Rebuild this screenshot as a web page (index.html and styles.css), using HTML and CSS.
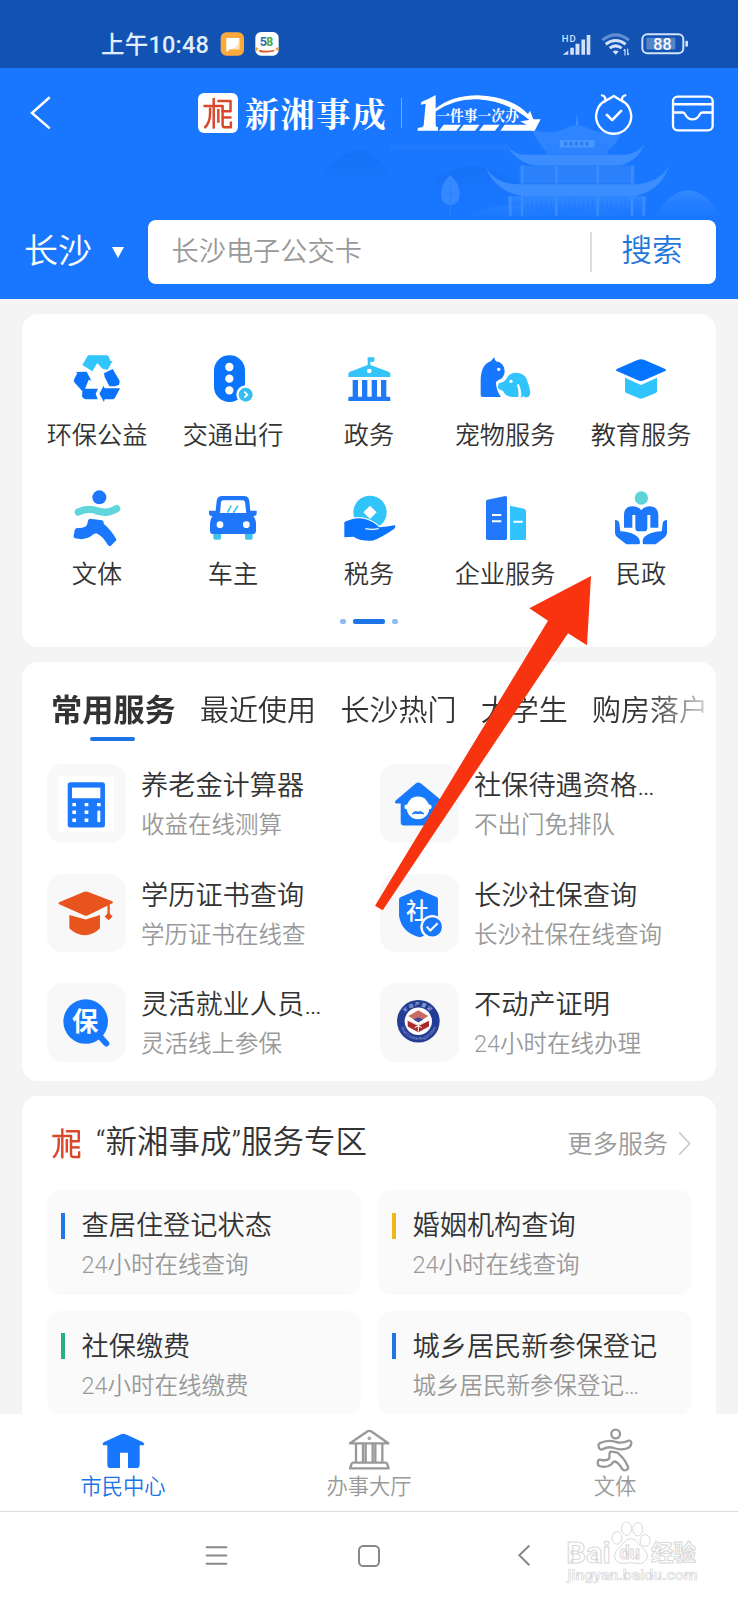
FILE: index.html
```html
<!DOCTYPE html>
<html lang="zh-CN">
<head>
<meta charset="utf-8">
<title>市民中心</title>
<link rel="stylesheet" href="styles.css">
</head>
<body>
<svg class="defs" width="0" height="0" aria-hidden="true">
  <defs>
    <g id="seal" fill="none" stroke="#d8472b" stroke-width="7.500" stroke-linejoin="round">
      <path d="M610 315H668V334"/>
      <path d="M641 291V384"/>
      <path d="M630 320V338Q630 366 613 382"/>
      <path d="M652 300H692V331H664"/>
      <path d="M655 324V366"/>
      <path d="M668 334V372Q668 380 676 380H693V362"/>
      <path d="M668 350H695"/>
    </g>
  </defs>
</svg>
<div class="screen">
  <div class="status">
    <span class="time">上午10:48</span>
    <svg class="app-ico" viewBox="660 96 72 72"><rect x="662" y="97" width="70" height="70" rx="17" fill="#fba93a"/><path d="M679 114h37q2 0 2 2v30q0 2-2 2h-26l-11 9z" fill="#fff"/><path d="M718 116v32h-26q22-5 26-32z" fill="#ffe3b5"/></svg>
    <svg class="app-ico gap" viewBox="764 96 72 72"><rect x="765" y="96" width="70" height="71" rx="17" fill="#fff"/><text x="778" y="138" class="t58"><tspan fill="#2b6fb8">5</tspan><tspan fill="#4aa84a">8</tspan></text><path d="M766 146l6 3M834 146l-6 3" stroke="#f29a1f" stroke-width="9"/><path d="M777 149q22 6 45 0v5q-22 6-45 2z" fill="#e2552c"/></svg>
    <svg class="sig" viewBox="580 94 92 70"><text x="581" y="121" class="hd">HD</text><path d="M584 160l17-13v13zM607 139h11v21h-11zM623 127h12v33h-12zM641 114h11v46h-11zM657 100h11v60h-11z" fill="#d3e2f8"/></svg>
    <svg class="wifi" viewBox="700 96 90 74" fill="none" stroke="#d3e2f8" stroke-width="9"><path d="M704 120q40-32 80 0" stroke="#5f8fd2"/><path d="M714 132q30-22 60 0M726 144q18-14 36 0"/><path d="M735 154q9-6 18 0l-9 10z" fill="#d3e2f8" stroke="none"/><path d="M772 148v18M780 146v18M768 152l4-5M784 160l-4 5" stroke-width="3.500"/></svg>
    <svg class="bat" viewBox="818 96 144 68"><rect x="822" y="102" width="123" height="57" rx="15" fill="none" stroke="#d3e2f8" stroke-width="6"/><rect x="834" y="113" width="87" height="35" rx="3" fill="#5584c9"/><rect x="951" y="122" width="8" height="18" rx="3" fill="#d3e2f8"/><text x="855" y="150" class="pct">88</text></svg>
  </div>

  <header class="header">
    <svg class="scene" viewBox="-300 204 1410 692" aria-hidden="true">
      <defs>
        <linearGradient id="hill" x1="0" y1="0" x2="0" y2="1"><stop offset="0" stop-color="#0f66e6" stop-opacity=".38"/><stop offset="1" stop-color="#1977ff" stop-opacity="0"/></linearGradient>
        <linearGradient id="lite" x1="0" y1="0" x2="0" y2="1"><stop offset="0" stop-color="#4595ff"/><stop offset="1" stop-color="#2a81ff" stop-opacity=".2"/></linearGradient>
      </defs>
      <path d="M-190 640Q-140 455-15 450 60 470 120 640z" fill="url(#hill)"/>
      <path d="M90 640Q200 500 310 500T560 640z" fill="url(#hill)"/>
      <path d="M65 432H420V452H65z" fill="#2780ff" opacity=".4"/>
      <path d="M300 650q120-70 240 0zM590 650q100-50 180 0zM860 645q100-150 200 0z" fill="url(#lite)" opacity=".6"/>
      <path d="M247 525q28 22 28 58-2 32-28 32t-28-32q0-36 28-58z" fill="#4392ff" opacity=".7"/>
      <path d="M247 560V650M247 585l-12-13M247 592l12-13" stroke="#2b81fb" stroke-width="3"/>
      <path d="M627 340l5 40h-10z" fill="#3c8dff"/>
      <path d="M490 388q60 18 105-4 12-8 32-8t32 8q40 20 104 8-18 50-62 68H540q-24-22-50-72z" fill="#2f85ff"/>
      <rect x="535" y="432" width="184" height="30" fill="#2c83fd"/>
      <rect x="575" y="420" width="104" height="22" fill="#4b98ff"/>
      <path d="M588 431h78" stroke="#2a7ef2" stroke-width="12" stroke-dasharray="10 6"/>
      <path d="M416 434q20 32 66 30h290q40-6 56-32-16 48-70 64H500q-56-10-84-62z" fill="#3c8eff"/>
      <path d="M455 496H800V550H455z" fill="#2a81fb"/>
      <path d="M463 496v54M565 496v54M689 496v54M793 496v54" stroke="#3c8eff" stroke-width="7"/>
      <path d="M353 502q30 50 95 50h360q64-5 94-52-22 70-100 88H470q-86-10-117-86z" fill="#3c8eff"/>
      <path d="M420 588H835V648H420z" fill="url(#lite)" opacity=".5"/>
      <path d="M427 588v60M462 588v60M565 588v60M689 588v60M792 588v60M827 588v60" stroke="#3c8eff" stroke-width="7"/>
      <path d="M470 604H786" stroke="#3c8eff" stroke-width="28" stroke-dasharray="3 11" opacity=".6"/>
    </svg>
    <div class="topbar">
      <svg class="back" viewBox="90 286 64 102"><path d="M150 289L96 337 150 384" fill="none" stroke="#fff" stroke-width="7.500"/></svg>
      <span class="badge"><svg viewBox="606 288 96 100"><use href="#seal"/></svg></span>
      <span class="brand">新湘事成</span>
      <i class="vline"></i>
      <svg class="slogan" viewBox="147 280 372 114">
        <path d="M203 283v90q0 6 7 7v10h-62l2-9q16 1 17-8l6-64-15 3 3-9q22-8 42-20z" fill="#fff"/>
        <path d="M200 326Q250 284 330 284 430 288 480 340L486 330 496 356 518 356 500 390H397l13-18h66l-20-10 28-4Q420 302 330 296 255 294 200 334z" fill="#fff"/>
        <path d="M227 372h52l-14 18h-52zM287 372h48l-14 18h-48zM347 372h48l-14 18h-48z" fill="#fff"/>
        <text x="205" y="361" class="slogan-text" textLength="247" lengthAdjust="spacingAndGlyphs">一件事一次办</text>
      </svg>
      <svg class="clock" viewBox="678 276 118 124" fill="none" stroke="#fff" stroke-width="7" stroke-linecap="round" stroke-linejoin="round"><path d="M738 285L718 297A53 53 0 1 0 757 297Z"/><path d="M702 283q6 0 9 6 5 8-2 14M773 283q-6 0-9 6-5 8 2 14"/><path d="M717 342l16 16 27-28" stroke-width="8"/></svg>
      <svg class="inbox" viewBox="909 282 130 112" fill="none" stroke="#fff" stroke-width="7" stroke-linejoin="round"><rect x="915" y="287" width="120" height="102" rx="14"/><path d="M915 310H1035M915 335H944Q950 335 952 341 960 356 974 356T996 341Q998 335 1004 335H1035"/></svg>
    </div>
    <div class="search-row">
      <span class="city">长沙</span>
      <i class="caret"></i>
      <div class="search"><span class="ph">长沙电子公交卡</span><span class="go">搜索</span></div>
    </div>
  </header>

  <main class="content">
    <section class="card grid">
      <div class="cell"><svg viewBox="147 123 168 168"><path d="M204 136h56q4 0 7 5l5 13 6-2-15 27-30-5 8-4-9-10-15 24-30-19z" fill="#31c5fc"/><path d="M232 160l22 24h-36z" fill="#fff"/><path d="M166 186l34-1 14 27-8-3-10 25q-5 8-7 12l-26-29q-3-6 0-10l9-18zM252 190l26-13 20 34q3 7-1 13l-12 5h-17l-14-28zM188 236h46l-7 15 6 17h-36q-9-1-11-9zM238 251l13-24 3 8h46l-15 28q-3 5-9 5h-22l-2 8z" fill="#0a73fb"/></svg><span>环保公益</span></div>
      <div class="cell"><svg viewBox="555 123 168 168"><rect x="582" y="136" width="93" height="140" rx="46" fill="#0b74fd"/><g fill="#fff"><circle cx="628" cy="171" r="12.500"/><circle cx="628" cy="206" r="12.500"/><circle cx="628" cy="241" r="12.500"/><circle cx="677" cy="254" r="28"/></g><circle cx="677" cy="254" r="21" fill="#36bdf0"/><path d="M673 245l9 9-9 9" fill="none" stroke="#fff" stroke-width="5"/></svg><span>交通出行</span></div>
      <div class="cell"><svg viewBox="963 123 168 168"><path d="M1043 142h20v13h-12v10l55 20q5 2 5 8v8H985v-8q0-6 5-8l53-20z" fill="#35c4f8"/><circle cx="1048" cy="183" r="7" fill="#fff"/><path d="M998 210h16v50h12v-50h16v50h13v-50h16v50h12v-50h16v50h8q4 0 4 4v9H985v-9q0-4 4-4h9z" fill="#2079f5"/></svg><span>政务</span></div>
      <div class="cell"><svg viewBox="327 123 168 168"><path d="M379 142q1 8 5 12 24 4 26 28 0 14-10 24-16 6-16 12 0 22 15 43H344q-6 0-6-6V212q0-48 30-58z" fill="#1677ff"/><circle cx="392" cy="178" r="5" fill="#fff"/><path d="M392 220q18-2 26-18 8-14 26-14 24 0 32 20 8 20 11 38 0 10-6 15-10 3-16-4-2-20-10-34-4-2-8 2 6 18 4 36h-20q-18-2-26-18-12-4-16-10z" fill="#31c3fb"/><path d="M451 222q8 18 6 42 18-4 6-40z" fill="#31c3fb"/><circle cx="429" cy="214" r="5" fill="#fff"/><path d="M450 224q9 17 7 38" fill="none" stroke="#fff" stroke-width="5"/></svg><span>宠物服务</span></div>
      <div class="cell"><svg viewBox="735 123 168 168"><path d="M771 203l48 22 48-22v40q0 4-4 6l-38 16q-6 2-12 0l-38-16q-4-2-4-6z" fill="#2fc4fc"/><path d="M810 149q9-3 18 0l62 27q8 4 0 8l-62 27q-9 4-18 0l-62-27q-8-4 0-8z" fill="#0474ff" stroke="#fff" stroke-width="12" paint-order="stroke"/></svg><span>教育服务</span></div>
      <div class="cell"><svg viewBox="147 540 168 168"><circle cx="238" cy="562" r="21" fill="#1b78fc"/><path d="M175 606q28-14 58-3 30 10 57-7" fill="none" stroke="#5ed6dc" stroke-width="22" stroke-linecap="round"/><path d="M210 626l36 5q4 1 5 6v4q22 18 39 48l-17 18q-5 3-9-1-16-28-35-36-10 2-16 9-18 13-48 6-5-2-4-7l3-17q2-6 8-8 14 3 26-4 5-8 6-17 2-6 6-6z" fill="#1b78fc"/></svg><span>文体</span></div>
      <div class="cell"><svg viewBox="555 540 168 168"><path d="M580 670h23v14q0 5-5 5h-13q-5 0-5-5zM675 670h23v14q0 5-5 5h-13q-5 0-5-5z" fill="#3fc3ea"/><path d="M606 558h66q14 0 16 15l3 29h19v8q0 8-8 8h-2q8 10 8 22v22q0 10-10 10H580q-10 0-10-10v-22q0-12 7-22h-2q-8 0-8-8v-8h20l3-29q2-15 16-15z" fill="#2076f8"/><path d="M610 571h58q6 0 7 6l4 32h-79l3-32q1-6 7-6z" fill="#fff"/><path d="M634 587l-12 21M654 587l-14 21" stroke="#3fc3ea" stroke-width="5"/><circle cx="600" cy="644" r="10" fill="#fff"/><circle cx="679" cy="644" r="10" fill="#fff"/></svg><span>车主</span></div>
      <div class="cell"><svg viewBox="963 540 168 168"><circle cx="1050" cy="607" r="50" fill="#31c4fb"/><path d="M1050 587l20 20-20 20-20-20z" fill="#fff"/><path d="M973 636q36-18 64-8 26 8 40 24 26-2 46-6 6 1 0 10-40 28-66 36-38 2-56-12l-28 2z" fill="#0a74fe" stroke="#fff" stroke-width="7" paint-order="stroke"/><path d="M1036 656q18 4 40 0" fill="none" stroke="#fff" stroke-width="4"/></svg><span>税务</span></div>
      <div class="cell"><svg viewBox="327 540 168 168"><path d="M354 575q0-5 4-6l54-11q5 0 5 5v122q0 5-5 5h-53q-5 0-5-5z" fill="#2178fa"/><path d="M426 587l42 9q6 2 6 8v82q0 4-4 4h-44z" fill="#31c3fd"/><path d="M372 615h28M372 634h28M436 635h28" stroke="#fff" stroke-width="6"/></svg><span>企业服务</span></div>
      <div class="cell"><svg viewBox="735 540 168 168"><circle cx="820" cy="564" r="20" fill="#5dd4da"/><path d="M768 653v-38q0-25 25-26 18 0 27 12 9-12 27-12 23 2 24 26v38h-24v-38h-9v38q0 11-9 11h-18q-9 0-9-11v-38h-9v38z" fill="#1b78fa"/><path d="M741 630q11 0 13 10l3 24q24 0 44 11 15 8 15 23 0 5-5 5h-36l-28-22q-6-5-6-13zM897 630q-11 0-13 10l-3 24q-24 0-44 11-15 8-13 23 0 5 5 5h34l28-22q6-5 6-13z" fill="#1b78fa"/></svg><span>民政</span></div>
      <div class="pager"><i></i><i class="on"></i><i></i></div>
    </section>

    <section class="card services">
      <nav class="tabs"><b>常用服务</b><span>最近使用</span><span>长沙热门</span><span>大学生</span><span>购房落户</span></nav>
      <div class="list">
        <div class="item"><div class="tile"><svg viewBox="80 311 237 236"><path d="M114 348H280V514H114z" fill="#fff"/><rect x="142" y="366" width="112" height="136" rx="8" fill="#1c79fb"/><path d="M155 382h85v32h-85z" fill="#fff"/><path d="M156 433h11M156 456h11M156 480h11M193 433h11M193 456h11M193 480h11M230 433h11" stroke="#fff" stroke-width="10"/><rect x="231" y="451" width="9" height="35" rx="4" fill="#fff"/></svg></div><div class="txt"><p>养老金计算器</p><small>收益在线测算</small></div></div>
        <div class="item"><div class="tile"><svg viewBox="59 311 237 236"><path d="M167 369q7-5 14 0l63 52q5 9-6 9h-9v57q0 9-9 9H131q-10 0-10-10v-56h-11q-10 0-4-9z" fill="#1779fb"/><ellipse cx="173" cy="443" rx="34" ry="34" fill="#fff"/><circle cx="139" cy="440" r="7" fill="#fff"/><circle cx="207" cy="440" r="7" fill="#fff"/><path d="M155 461q10-11 18-5 8-6 18 5-10-4-18-1-8-3-18 1z" fill="#1779fb" stroke="#1779fb" stroke-width="3"/></svg></div><div class="txt"><p>社保待遇资格…</p><small>不出门免排队</small></div></div>
        <div class="item"><div class="tile"><svg viewBox="80 641 237 236"><path d="M190 695q7-3 14 0l70 27q8 4 1 8l-72 35q-6 3-12 0l-73-32q-8-4 0-8zM147 764l49 14 43-14v40q-20 21-46 21t-46-21z" fill="#e8541e"/><path d="M265 733v32" stroke="#e8541e" stroke-width="7"/><path d="M265 757l12 12-12 11-12-11z" fill="#e8541e"/></svg></div><div class="txt"><p>学历证书查询</p><small>学历证书在线查</small></div></div>
        <div class="item"><div class="tile"><svg viewBox="59 641 237 236"><path d="M169 690q6-3 12 0l49 21q3 1 3 6v52q-4 46-54 62-55-13-63-64v-49q0-5 4-7z" fill="#1878fb"/><text x="137" y="777" class="glyph sm">社</text><circle cx="216" cy="800" r="36" fill="#fafafa"/><circle cx="216" cy="800" r="29" fill="#1878fb"/><path d="M199 799l11 12 22-22" fill="none" stroke="#fff" stroke-width="6"/></svg></div><div class="txt"><p>长沙社保查询</p><small>长沙社保在线查询</small></div></div>
        <div class="item"><div class="tile"><svg viewBox="80 970 237 236"><path d="M236 1128l22 24" stroke="#1878fb" stroke-width="18" stroke-linecap="round"/><circle cx="196" cy="1086" r="67" fill="#1878fb"/><text x="155" y="1115" class="glyph">保</text></svg></div><div class="txt"><p>灵活就业人员…</p><small>灵活线上参保</small></div></div>
        <div class="item"><div class="tile"><svg viewBox="59 970 237 236"><circle cx="174" cy="1085" r="64" fill="#233d94"/><path id="arc" d="M128 1085a46 46 0 0 1 92 0" fill="none"/><path id="arc2" d="M118 1085a56 56 0 0 0 112 0" fill="none"/><circle cx="174" cy="1085" r="41" fill="#fff"/><text class="ring"><textPath href="#arc" startOffset="26">不动产登记</textPath></text><text class="ring en"><textPath href="#arc2" startOffset="20">Real Estate Registration</textPath></text><path d="M174 1052l30 17-30 20-30-20z" fill="#c96a63"/><path d="M159 1080l15-7 15 7-15 8z" fill="#394a99"/><path d="M142 1081l32 15 32-15v20l-32 17-32-17z" fill="#a92a2a"/><path d="M142 1082l32 16 32-16M174 1098v18M163 1104l11-5 10 5" fill="none" stroke="#fff" stroke-width="3"/></svg></div><div class="txt"><p>不动产证明</p><small>24小时在线办理</small></div></div>
      </div>
    </section>

    <section class="card zone">
      <div class="zone-head">
        <svg class="zone-logo" viewBox="606 288 96 100"><use href="#seal"/></svg>
        <h2>“新湘事成”服务专区</h2>
        <span class="more">更多服务</span>
        <svg class="chev" viewBox="955 122 40 76"><path d="M959 126l32 34-32 34" fill="none" stroke="#c8c8c8" stroke-width="5"/></svg>
      </div>
      <div class="boxes">
        <div class="box"><i class="bar"></i><div><p>查居住登记状态</p><small>24小时在线查询</small></div></div>
        <div class="box"><i class="bar yellow"></i><div><p>婚姻机构查询</p><small>24小时在线查询</small></div></div>
        <div class="box"><i class="bar green"></i><div><p>社保缴费</p><small>24小时在线缴费</small></div></div>
        <div class="box"><i class="bar"></i><div><p>城乡居民新参保登记</p><small>城乡居民新参保登记…</small></div></div>
      </div>
    </section>
  </main>

  <nav class="tabbar">
    <div class="tab active"><svg viewBox="299 86 138 132"><path d="M362 105q7-4 14 0l52 24q6 4 3 9h-13v58q0 10-10 10h-25v-46h-24v46h-28q-10 0-10-10v-58h-13q-4-5 2-9z" fill="#1777ff"/></svg><span>市民中心</span></div>
    <div class="tab"><svg viewBox="1038 86 138 132" fill="none" stroke="#999" stroke-width="7" stroke-linejoin="round"><path d="M1050 132l53-36q5-3 10 0l52 36zM1068 133v56M1089 133v56M1097 133v56M1118 133v56M1126 133v56M1147 133v56M1056 190H1160M1056 190l-6 17H1166l-6-17"/><circle cx="1108" cy="117" r="2"/></svg><span>办事大厅</span></div>
    <div class="tab"><svg viewBox="674 86 138 132" fill="none" stroke="#999" stroke-width="7" stroke-linejoin="round"><circle cx="745" cy="104" r="13"/><path d="M696 132q26-12 50-4 20 5 37-4 9-2 9 8-1 11-15 16-18 5-38-2-14-6-34 4-8 3-11-8-2-7 2-10zM727 160q1-4 6-3l17 3q4 1 6 6 14 10 26 36 2 7-5 10-8 3-12-2-10-20-23-24-6 2-10 9-15 12-36 5-7-4-4-14 3-8 10-4 20 3 24-6z"/></svg><span>文体</span></div>
  </nav>

  <div class="sysnav">
    <svg class="menu" viewBox="618 434 64 64"><path d="M620 441h60M620 466h60M620 491h60" stroke="#888" stroke-width="6" stroke-linecap="round"/></svg>
    <svg class="home" viewBox="0 0 66 66"><rect x="3" y="3" width="60" height="60" rx="13" fill="none" stroke="#888" stroke-width="6"/></svg>
    <svg class="prev" viewBox="450 432 40 70"><path d="M485 436L454 466l31 31" fill="none" stroke="#888" stroke-width="6"/></svg>
    <svg class="mark" viewBox="590 356 404 196" aria-hidden="true">
      <g class="mk"><text x="592" y="485" class="mk-a" textLength="134" lengthAdjust="spacingAndGlyphs">Bai</text>
      <ellipse cx="745" cy="410" rx="15" ry="19"/><ellipse cx="774" cy="382" rx="15" ry="20"/><ellipse cx="808" cy="384" rx="15" ry="20"/><ellipse cx="830" cy="418" rx="15" ry="18"/><path d="M787 412q14 0 23 14 8 12 18 19 14 16 5 32-8 12-24 10-22-4-44 0-18 0-25-13-6-18 8-30 10-8 16-18 9-14 23-14z"/><text x="753" y="474" class="mk-d">du</text>
      <text x="848" y="480" class="mk-b">经验</text><text x="596" y="537" class="mk-c" textLength="392" lengthAdjust="spacingAndGlyphs">jingyan.baidu.com</text></g>
    </svg>
  </div>

  <svg class="pointer" viewBox="375 576 217 335" aria-hidden="true"><path d="M591 576L529.300 608.300 548 620.700 375 905.700 382.700 910.300 568 633.300 587 645.300z" fill="#f7340f"/></svg>
</div>
</body>
</html>
```

FILE: styles.css
```css
* { box-sizing: border-box; margin: 0; padding: 0; }
body { background: #f4f4f4; font-family: Roboto, "Noto Sans CJK SC", sans-serif; color: #333; }
i { display: block; }
svg { display: block; flex: none; overflow: visible; }
.defs { position: absolute; }
.screen { position: relative; width: 738px; height: 1600px; overflow: hidden; display: flex; flex-direction: column; white-space: nowrap; }

/* status bar */
.status { height: 68px; flex: none; background: #1152b3; display: flex; align-items: center; padding: 20px 17px 0 101px; color: #e3edfb; }
.time { font-size: 23.500px; line-height: 28px; font-weight: 500; width: 119px; letter-spacing: .2px; padding-top: 1px; }
.app-ico { width: 24px; height: 24px; }
.app-ico.gap { margin-left: 10.500px; }
.t58 { font: bold 38px Roboto, sans-serif; letter-spacing: -3px; }
.sig { width: 31px; height: 23px; margin-left: auto; }
.hd { font: 500 29px Roboto, sans-serif; fill: #d3e2f8; letter-spacing: 3px; }
.wifi { width: 30px; height: 25px; margin-left: 9px; }
.bat { width: 48px; height: 23px; margin: -1px 32px 0 10px; }
.pct { font: 500 48px Roboto, sans-serif; fill: #fff; }

/* header */
.header { position: relative; height: 231px; flex: none; background: #1977ff; }
.scene { position: absolute; right: 0; top: 0; width: 470px; height: 231px; }
.topbar { position: relative; height: 90px; display: flex; align-items: center; padding-left: 30px; }
.back { width: 21px; height: 34px; margin-top: -1px; }
.badge { width: 40px; height: 40px; margin-left: 147px; background: #fff; border-radius: 6px; display: flex; align-items: center; justify-content: center; }
.badge svg { width: 32px; height: 33px; }
.brand { margin-left: 7px; width: 145px; font: bold 34px/40px "Noto Serif CJK SC", "Noto Sans CJK SC", serif; letter-spacing: 1.600px; color: #fff; }
.vline { width: 1px; height: 30px; margin-left: 11px; background: #6fa9ff; }
.slogan { width: 124px; height: 38px; margin-left: 15px; }
.slogan-text { font: bold 43px "Noto Serif CJK SC", "Noto Sans CJK SC", serif; fill: #fff; }
.clock { width: 39px; height: 41px; margin-left: 53px; }
.inbox { width: 43px; height: 37px; margin-left: 38px; }
.search-row { position: relative; display: flex; align-items: center; margin-top: 62px; padding-left: 24px; height: 64px; }
.city { font-size: 34px; line-height: 44px; width: 88px; color: #fff; font-weight: 350; }
.caret { border: solid transparent; border-width: 11px 6.500px 0; border-top-color: #fff; }
.search { margin-left: 23.500px; width: 568px; height: 64px; background: #fff; border-radius: 8px; display: flex; align-items: center; }
.ph { font-size: 27.200px; color: #999; padding-left: 24px; width: 444px; line-height: 40px; border-right: 2px solid #ddd; font-weight: 350; }
.go { font-size: 30.500px; line-height: 40px; color: #1f76dc; margin-left: 30px; font-weight: 350; }
.city, .go { margin-top: -2px; }

/* cards */
.content { height: 1115px; flex: none; padding: 15px 22px 0; overflow: hidden; display: flex; flex-direction: column; gap: 15px; font-weight: 350; }
.card { flex: none; background: #fff; border-radius: 16px; }
.grid { height: 333px; padding: 37px 7px 0; display: grid; grid-template-columns: repeat(5, 136px); grid-template-rows: 139px 129px 20px; }
.cell { display: flex; flex-direction: column; align-items: center; }
.cell svg { width: 56px; height: 56px; }
.cell span { margin-top: 11px; font-size: 25.200px; line-height: 36px; }
.pager { grid-column: 1 / -1; display: flex; justify-content: center; gap: 7px; }
.pager i { width: 6px; height: 5px; border-radius: 2px; background: #8fbcf5; }
.pager .on { width: 32px; background: #1b75e6; }

.services { height: 419px; overflow: hidden; }
.tabs { display: flex; align-items: flex-start; gap: 24.300px; padding: 27px 0 0 29px; height: 80px; width: 694px; font-size: 29px; line-height: 44px; -webkit-mask-image: linear-gradient(90deg, #000 625px, transparent 702px); mask-image: linear-gradient(90deg, #000 625px, transparent 702px); }
.tabs b { position: relative; font-size: 31.200px; font-weight: 700; }
.tabs b::after { content: ""; position: absolute; left: 39px; top: 48px; width: 45px; height: 4px; border-radius: 2px; background: #1b75e6; }
.list { padding: 22px 0 0 25px; display: grid; grid-template-columns: 333px 333px; grid-auto-rows: 109.500px; }
.item { display: flex; }
.tile { width: 79px; height: 78.500px; border-radius: 16px; background: #f8f8f8; }
.tile svg { width: 79px; height: 78.500px; }
.txt { padding: 2px 0 0 15px; }
p { font-size: 27.200px; line-height: 40px; }
small { display: block; font-size: 23.500px; line-height: 38px; color: #999; }
.glyph { font: bold 79px "Noto Sans CJK SC", sans-serif; fill: #fff; }
.glyph.sm { font-size: 68px; font-weight: 500; }
.ring { font: bold 14px "Noto Sans CJK SC", sans-serif; fill: #aab6dd; letter-spacing: 4px; }
.ring.en { font: 13px Roboto, sans-serif; fill: #8d9bcf; letter-spacing: 0; }

.zone { height: 340px; }
.zone-head { display: flex; align-items: center; height: 94px; padding: 0 25px 0 29px; }
.zone-logo { width: 31px; height: 33px; }
h2 { margin-left: 14px; font-size: 31.500px; line-height: 44px; font-weight: 350; }
.more { margin-left: auto; font-size: 25.200px; line-height: 36px; color: #999; padding-top: 3px; }
.chev { width: 13px; height: 25px; margin-left: 10px; }
.boxes { padding-left: 25px; display: grid; grid-template-columns: 314px 314px; grid-auto-rows: 104.500px; gap: 16px 17px; }
.box { display: flex; align-items: flex-start; background: #fafafa; border-radius: 14px; padding: 16px 0 0 13.500px; }
.bar { width: 4.500px; height: 26px; margin: 6.500px 16.500px 0 0; background: #2176e6; }
.bar.yellow { background: #edb71f; }
.bar.green { background: #2aae80; }

/* bottom */
.tabbar { height: 98px; flex: none; background: #fff; border-bottom: 1px solid #ddd; display: grid; grid-template-columns: repeat(3, 1fr); }
.tab { display: flex; flex-direction: column; align-items: center; padding-top: 14px; color: #999; font-size: 21.300px; line-height: 30px; font-weight: 350; }
.tab svg { width: 46px; height: 44px; }
.active { color: #1b75e6; }
.sysnav { height: 88px; flex: none; background: #fff; display: flex; align-items: center; }
.menu, .home, .prev { margin-top: -1px; }
.menu { width: 21px; height: 21px; margin-left: 206px; }
.home { width: 22px; height: 22px; margin-left: 131px; }
.prev { width: 13px; height: 23px; margin-left: 138px; }
.mark { width: 135px; height: 65px; margin: -7px 0 0 34px; }
.mk { fill: #fff; stroke: #d8d8d8; stroke-width: 3px; }
.mk-a { font: bold 88px Roboto, sans-serif; }
.mk-b { font: bold 68px "Noto Sans CJK SC", sans-serif; }
.mk-c { font: 500 43px Roboto, sans-serif; stroke-width: 2px; }
.mk-d { font: bold 54px Roboto, sans-serif; }

/* annotation arrow over the page */
.pointer { position: absolute; left: 375px; top: 576px; width: 217px; height: 335px; }
```
